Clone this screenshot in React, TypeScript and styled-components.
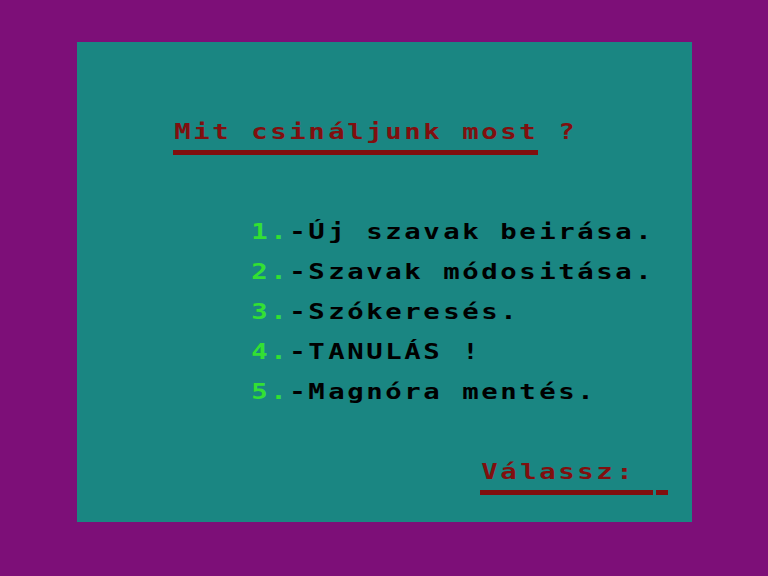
import React from "react";
import styled, { createGlobalStyle } from "styled-components";

const CELL_W = 19.2;

const Global = createGlobalStyle`
  html, body { margin: 0; padding: 0; background: #7d0f78; }
  body { width: 768px; height: 576px; overflow: hidden; }
`;

const Border = styled.div`
  width: 768px;
  height: 576px;
  box-sizing: border-box;
  padding: 42px 76px 54px 77px;
  background: #7d0f78;
`;

const Screen = styled.div`
  width: 615px;
  height: 480px;
  background: #1a8682;
  display: grid;
  grid-template-rows: repeat(24, 20px);
  font-family: "DejaVu Sans Mono", "Liberation Mono", monospace;
  font-weight: bold;
  font-size: 21px;
  line-height: 20px;
  white-space: pre;
`;

const Line = styled.div<{ $row: number; $col: number; $color?: string }>`
  grid-row: ${(p) => p.$row + 1};
  grid-column: 1;
  padding-left: ${(p) => p.$col * CELL_W}px;
  color: ${(p) => p.$color ?? "#000"};
  display: flex;
`;

const Char = styled.span<{ $color?: string }>`
  display: inline-block;
  width: ${CELL_W}px;
  text-align: center;
  transform: scaleX(1.3);
  ${(p) => (p.$color ? `color: ${p.$color};` : "")}
`;

const RuleRow = styled.div<{ $row: number; $col: number }>`
  grid-row: ${(p) => p.$row + 1};
  grid-column: 1;
  padding-left: ${(p) => p.$col * CELL_W - 0.5}px;
  padding-top: 8px;
  display: flex;
  align-items: flex-start;
  gap: 3px;
`;

const Rule = styled.div<{ $w: number }>`
  width: ${(p) => p.$w}px;
  height: 5px;
  background: #800f0f;
`;

function Chars({ text, color }: { text: string; color?: string }) {
  return (
    <>
      {Array.from(text).map((c, i) => (
        <Char key={i} $color={color}>
          {c}
        </Char>
      ))}
    </>
  );
}

const items = [
  "Új szavak beirása.",
  "Szavak módositása.",
  "Szókeresés.",
  "TANULÁS !",
  "Magnóra mentés.",
];

export default function App() {
  return (
    <>
      <Global />
      <Border>
        <Screen>
          <Line $row={4} $col={5} $color="#800f0f">
            <Chars text="Mit csináljunk most ?" />
          </Line>
          <RuleRow $row={5} $col={5}>
            <Rule $w={365} />
          </RuleRow>
          {items.map((t, i) => (
            <Line key={i} $row={9 + i * 2} $col={9}>
              <Chars text={`${i + 1}.`} color="#33e033" />
              <Chars text={`-${t}`} />
            </Line>
          ))}
          <Line $row={21} $col={21} $color="#800f0f">
            <Chars text="Válassz:" />
          </Line>
          <RuleRow $row={22} $col={21}>
            <Rule $w={173} />
            <Rule $w={12} />
          </RuleRow>
        </Screen>
      </Border>
    </>
  );
}
